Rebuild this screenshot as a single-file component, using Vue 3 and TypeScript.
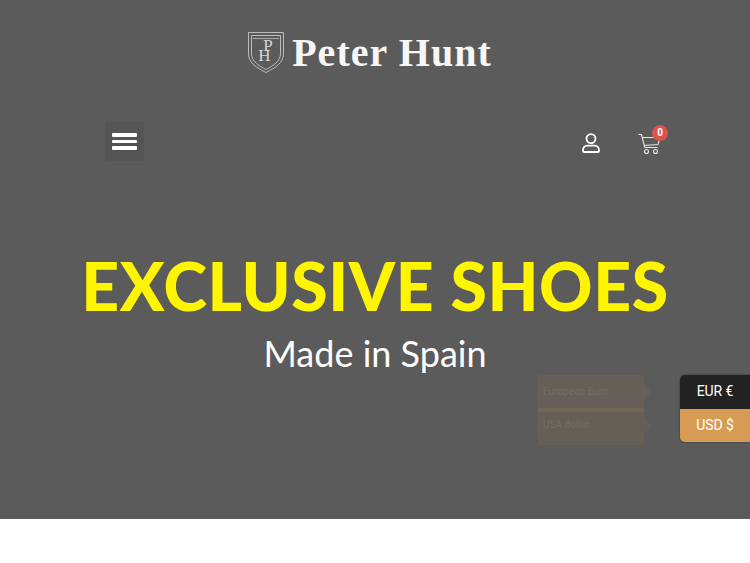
<script setup lang="ts">
interface Currency { code: string; name: string; active: boolean }
const currencies: Currency[] = [
  { code: 'EUR €', name: 'European Euro', active: false },
  { code: 'USD $', name: 'USA dollar', active: true },
]
</script>

<template>
  <div class="page">
    <section class="hero">
      <header class="logo">
        <div class="crest">
          <svg width="36" height="41" viewBox="0 0 36 41" fill="none" stroke="#bdbdbd">
            <path d="M0.500 0.500H35.500V22C35.500 31 27 36 18 40.500C9 36 0.500 31 0.500 22Z" stroke-width="1" />
            <path d="M3.500 3.500H32.500V22C32.500 29 25 34 18 37.500C11 34 3.500 29 3.500 22Z" stroke-width="1" />
            <path d="M5 6.500H31" stroke-width="0.800" />
          </svg>
          <span class="crest-p">P</span>
          <span class="crest-h">H</span>
        </div>
        <span class="brand">Peter Hunt</span>
      </header>

      <nav class="bar">
        <button class="menu" aria-label="Menu">
          <span></span><span></span><span></span>
        </button>
        <div class="actions">
          <svg class="user" width="18" height="20" viewBox="0 0 18 20" fill="none" stroke="#fff" stroke-width="1.800">
            <circle cx="9" cy="5.600" r="4.500" />
            <path d="M2.200 19C1.400 19 1 18.500 1 17.700C1 14.500 3 12.600 5.500 12.600H12.500C15 12.600 17 14.500 17 17.700C17 18.500 16.600 19 15.800 19Z" />
          </svg>
          <div class="cart">
            <svg width="23" height="22" viewBox="0 0 23 22" fill="none" stroke="#e6e6e6" stroke-width="1.100">
              <path d="M0.500 1.500H3.500L6.800 14.500H19.500" />
              <path d="M4.300 4.500H22L20 11.500L6 12.500" />
              <circle cx="8.500" cy="18.500" r="2" />
              <circle cx="17.500" cy="18.500" r="2" />
            </svg>
            <span class="badge">0</span>
          </div>
        </div>
      </nav>

      <div class="copy">
        <h1>EXCLUSIVE SHOES</h1>
        <p>Made in Spain</p>
      </div>

      <div class="tips">
        <div v-for="c in currencies" :key="c.name" class="tip">{{ c.name }}</div>
      </div>

      <div class="switcher">
        <div v-for="c in currencies" :key="c.code" class="cur" :class="{ active: c.active }">{{ c.code }}</div>
      </div>
    </section>
    <div class="rest"></div>
  </div>
</template>

<style>
html, body { margin: 0; background: #fff; }
</style>

<style scoped>
.page { width: 750px; height: 563px; overflow: hidden; font-family: "Lato", sans-serif; }
.hero {
  position: relative;
  height: 519px;
  background: #5b5b5b;
  display: flex;
  flex-direction: column;
  box-sizing: border-box;
  padding-top: 32px;
}
.logo {
  display: flex;
  align-items: center;
  align-self: center;
  height: 41px;
  margin-left: -10px;
  gap: 8px;
}
.crest { position: relative; width: 36px; height: 41px; }
.crest svg { display: block; }
.crest-p, .crest-h {
  position: absolute;
  font-family: "Liberation Serif", serif;
  font-size: 17px;
  line-height: 8px;
  color: #d6d6d6;
}
.crest-p { left: 15px; top: 10px; }
.crest-h { left: 10px; top: 20px; }
.brand {
  font-family: "Liberation Serif", serif;
  font-weight: 700;
  font-size: 40px;
  line-height: 41px;
  color: #f6f6f6;
  letter-spacing: 1.05px;
}
.bar {
  display: flex;
  justify-content: space-between;
  align-items: center;
  margin-top: 49px;
  padding: 0 89px 0 105px;
  height: 39px;
}
.menu {
  width: 39px;
  height: 39px;
  border: 0;
  padding: 0;
  border-radius: 3px;
  background: #555;
  display: flex;
  flex-direction: column;
  align-items: center;
  justify-content: center;
  gap: 3px;
}
.menu span { display: block; width: 25px; height: 3.500px; border-radius: 1px; background: #fff; }
.actions { display: flex; align-items: center; gap: 38px; margin-top: 2px; }
.user { display: block; }
.cart { position: relative; width: 23px; height: 22px; margin-top: 3px; }
.cart svg { display: block; }
.badge {
  position: absolute;
  left: 14px;
  top: -8px;
  width: 16px;
  height: 16px;
  border-radius: 50%;
  background: #d9534f;
  color: #fff;
  font-family: "Roboto", sans-serif;
  font-size: 10px;
  font-weight: 700;
  line-height: 16px;
  text-align: center;
}
.copy { text-align: center; color: #fff; margin-top: 85px; }
h1 {
  margin: 0;
  color: #fff500;
  font-family: "Lato", sans-serif;
  font-weight: 900;
  font-size: 66px;
  line-height: 80px;
  letter-spacing: 0.6px;
}
p {
  margin: 5px 0 0;
  font-size: 36px;
  line-height: 44px;
  color: #fff;
}
.tips {
  position: absolute;
  left: 538px;
  top: 375px;
  width: 106px;
  display: flex;
  flex-direction: column;
  gap: 4px;
  background: #6f6753;
  border-radius: 3px;
}
.tip {
  position: relative;
  height: 33px;
  padding-left: 5px;
  background: #665f57;
  color: #6f6c66;
  font-family: "Roboto", sans-serif;
  font-size: 10px;
  font-weight: 500;
  line-height: 33px;
  white-space: nowrap;
}
.tip:first-child { border-radius: 3px 3px 0 0; }
.tip:last-child { border-radius: 0 0 3px 3px; line-height: 26px; }
.tip::after {
  content: "";
  position: absolute;
  left: 100%;
  top: 8px;
  border-left: 7px solid #665f57;
  border-top: 9px solid transparent;
  border-bottom: 9px solid transparent;
}
.tip:last-child::after { top: 5px; }
.switcher {
  position: absolute;
  right: 0;
  top: 375px;
  width: 70px;
  border-radius: 5px 0 0 5px;
  overflow: hidden;
  box-shadow: 0 0 2px rgba(0, 0, 0, 0.5);
}
.cur {
  height: 33.500px;
  background: #222;
  color: #fff;
  font-family: "Roboto", sans-serif;
  font-size: 14px;
  letter-spacing: -0.1px;
  line-height: 33.500px;
  text-align: center;
}
.cur.active { background: #d89b54; }
.rest { height: 44px; background: #fff; }
</style>
